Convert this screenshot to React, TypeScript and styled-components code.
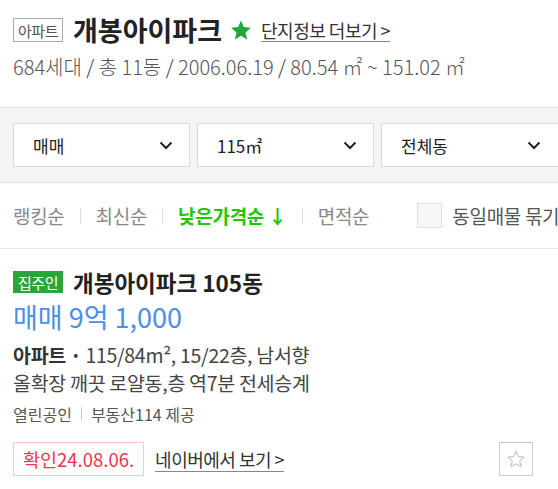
import styled, { createGlobalStyle } from "styled-components";

const GlobalStyle = createGlobalStyle`
  html, body {
    margin: 0;
    padding: 0;
    background: #fff;
    overflow: hidden;
  }
  body {
    font-family: "Noto Sans CJK KR", "Noto Sans", sans-serif;
    color: #222;
  }
`;

const Page = styled.div`
  width: 558px;
`;

const Header = styled.div`
  padding: 14px 13px 0;
  height: 107px;
  box-sizing: border-box;
`;

const TitleRow = styled.div`
  display: flex;
  align-items: center;
  height: 32px;
  white-space: nowrap;
`;

const TypeBadge = styled.span`
  display: inline-flex;
  align-items: center;
  justify-content: center;
  width: 50px;
  height: 24px;
  box-sizing: border-box;
  border: 1px solid #aaa;
  font-size: 15px;
  color: #555;
  letter-spacing: -0.5px;
`;

const Title = styled.h1`
  margin: 0 0 0 10px;
  font-size: 27px;
  line-height: 32px;
  font-weight: 700;
  color: #222;
`;

const StarIcon = styled.svg`
  margin-left: 7px;
  width: 24px;
  height: 24px;
`;

const MoreLink = styled.a`
  margin-left: 8px;
  font-size: 18px;
  color: #333;
  text-decoration: none;
  border-bottom: 1px solid #888;
  line-height: 22px;
  letter-spacing: -0.5px;
`;

const Summary = styled.div`
  margin-top: 8px;
  font-size: 20px;
  color: #555;
  font-weight: 300;
  line-height: 26px;
  white-space: nowrap;
`;

const Slash = styled.span`
  color: #333;
`;

const FilterBar = styled.div`
  background: #f4f4f4;
  border-top: 1px solid #e2e2e2;
  border-bottom: 1px solid #e2e2e2;
  padding: 15px 13px;
  display: flex;
  gap: 7px;
`;

const Select = styled.div<{ $wide?: boolean }>`
  flex: none;
  width: ${(p) => (p.$wide ? "200px" : "177px")};
  height: 44px;
  box-sizing: border-box;
  background: #fff;
  border: 1px solid #d9d9d9;
  display: flex;
  align-items: center;
  padding: 0 ${(p) => (p.$wide ? "38px" : "15px")} 0 19px;
  justify-content: space-between;
  font-size: 17px;
  color: #222;
`;

const SortRow = styled.div`
  height: 65px;
  border-bottom: 1px solid #e5e5e5;
  display: flex;
  align-items: center;
  padding: 0 13px;
`;

const SortItem = styled.span<{ $active?: boolean }>`
  flex: none;
  font-size: 19px;
  color: ${(p) => (p.$active ? "#1ec800" : "#888")};
  font-weight: ${(p) => (p.$active ? 700 : 400)};
  letter-spacing: -0.3px;
  white-space: nowrap;
`;

const SortDivider = styled.span`
  flex: none;
  width: 1px;
  height: 16px;
  background: #ddd;
  margin: 0 15px;
`;

const CheckBox = styled.span`
  flex: none;
  margin-left: 48px;
  width: 25px;
  height: 25px;
  box-sizing: border-box;
  border: 1px solid #e0e0e0;
  background: #f7f7f7;
`;

const CheckLabel = styled.span`
  flex: none;
  margin-left: 10px;
  font-size: 19px;
  color: #555;
  white-space: nowrap;
  letter-spacing: -0.3px;
`;

const Item = styled.div`
  padding: 19px 13px 0;
`;

const ItemTitleRow = styled.div`
  display: flex;
  align-items: center;
  height: 28px;
`;

const OwnerBadge = styled.span`
  display: inline-flex;
  align-items: center;
  justify-content: center;
  width: 50px;
  height: 22px;
  background: #2aa53a;
  color: #fff;
  font-size: 15px;
  letter-spacing: -0.5px;
`;

const ItemTitle = styled.h2`
  margin: 0 0 0 10px;
  font-size: 22.5px;
  line-height: 28px;
  font-weight: 700;
  color: #222;
`;

const Price = styled.div`
  margin-top: 4px;
  font-size: 27px;
  font-weight: 400;
  color: #4a8fe7;
  line-height: 34px;
`;

const Spec = styled.div`
  margin-top: 7px;
  font-size: 19.5px;
  color: #444;
  line-height: 28px;
  letter-spacing: -0.3px;
`;

const SpecType = styled.b`
  font-weight: 700;
  color: #333;
`;

const Desc = styled.div`
  font-size: 19.5px;
  color: #444;
  line-height: 28px;
  letter-spacing: -0.3px;
`;

const Agent = styled.div`
  margin-top: 6px;
  font-size: 16px;
  color: #555;
  display: flex;
  align-items: center;
  line-height: 22px;
`;

const AgentDivider = styled.span`
  width: 1px;
  height: 14px;
  background: #ccc;
  margin: 0 9px;
`;

const BottomRow = styled.div`
  margin-top: 17px;
  display: flex;
  align-items: center;
  height: 34px;
`;

const ConfirmBox = styled.span`
  height: 34px;
  box-sizing: border-box;
  border: 1px solid #ffc6cc;
  color: #f5334c;
  font-size: 18.5px;
  padding: 0 9px;
  display: inline-flex;
  align-items: center;
`;

const NaverLink = styled.a`
  margin-left: 11px;
  font-size: 18px;
  color: #333;
  text-decoration: none;
  border-bottom: 1px solid #888;
  line-height: 24px;
  letter-spacing: -0.5px;
`;

const FavButton = styled.button`
  margin-left: auto;
  margin-right: 12px;
  width: 34px;
  height: 34px;
  box-sizing: border-box;
  border: 1px solid #ccc;
  background: #fff;
  padding: 0;
  display: flex;
  align-items: center;
  justify-content: center;
`;

const Chevron = () => (
  <svg width="16" height="10" viewBox="0 0 16 10">
    <path d="M2.5 2.5l5.5 5.5 5.5-5.5" fill="none" stroke="#222" strokeWidth="2" />
  </svg>
);

const starPath =
  "M12 2.5l2.8 6.6 7.1.6-5.4 4.7 1.6 7-6.1-3.7-6.1 3.7 1.6-7L2.1 9.7l7.1-.6z";

export default function App() {
  return (
    <Page>
      <GlobalStyle />
      <Header>
        <TitleRow>
          <TypeBadge>아파트</TypeBadge>
          <Title>개봉아이파크</Title>
          <StarIcon viewBox="0 0 24 24">
            <path d={starPath} fill="#1fa83a" />
          </StarIcon>
          <MoreLink>단지정보 더보기 &gt;</MoreLink>
        </TitleRow>
        <Summary>
          684세대 <Slash>/</Slash> 총 11동 <Slash>/</Slash> 2006.06.19 <Slash>/</Slash> 80.54 ㎡ ~ 151.02 ㎡
        </Summary>
      </Header>
      <FilterBar>
        <Select>
          매매
          <Chevron />
        </Select>
        <Select>
          115㎡
          <Chevron />
        </Select>
        <Select $wide>
          전체동
          <Chevron />
        </Select>
      </FilterBar>
      <SortRow>
        <SortItem>랭킹순</SortItem>
        <SortDivider />
        <SortItem>최신순</SortItem>
        <SortDivider />
        <SortItem $active>낮은가격순 ↓</SortItem>
        <SortDivider />
        <SortItem>면적순</SortItem>
        <CheckBox />
        <CheckLabel>동일매물 묶기</CheckLabel>
      </SortRow>
      <Item>
        <ItemTitleRow>
          <OwnerBadge>집주인</OwnerBadge>
          <ItemTitle>개봉아이파크 105동</ItemTitle>
        </ItemTitleRow>
        <Price>매매 9억 1,000</Price>
        <Spec>
          <SpecType>아파트 · </SpecType>115/84m², 15/22층, 남서향
        </Spec>
        <Desc>올확장 깨끗 로얄동,층 역7분 전세승계</Desc>
        <Agent>
          열린공인
          <AgentDivider />
          부동산114 제공
        </Agent>
        <BottomRow>
          <ConfirmBox>확인24.08.06.</ConfirmBox>
          <NaverLink>네이버에서 보기 &gt;</NaverLink>
          <FavButton>
            <svg width="20" height="20" viewBox="0 0 24 24">
              <path d={starPath} fill="none" stroke="#bbb" strokeWidth="1.2" />
            </svg>
          </FavButton>
        </BottomRow>
      </Item>
    </Page>
  );
}
